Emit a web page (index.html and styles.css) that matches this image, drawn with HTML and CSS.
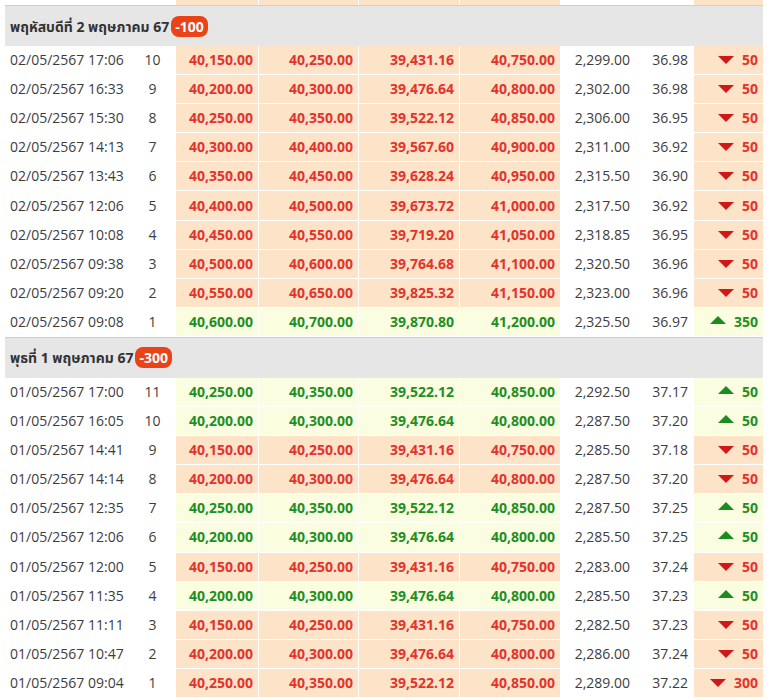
FILE: index.html
```html
<!DOCTYPE html>
<html lang="th">
<head>
<meta charset="utf-8">
<title>ราคาทองคำ</title>
<link rel="stylesheet" href="styles.css">
</head>
<body>
<table class="prices">
<colgroup>
<col class="w-date"><col class="w-n"><col class="w-a"><col class="w-b"><col class="w-b2"><col class="w-b3"><col class="w-c"><col class="w-d"><col class="w-e">
</colgroup>
<tbody>
<tr class="stub"><td></td><td></td><td class="dn"></td><td class="dn"></td><td class="dn"></td><td class="dn"></td><td></td><td></td><td class="dn"></td></tr>

<tr class="day"><td colspan="9">พฤหัสบดีที่ 2 พฤษภาคม 67<span class="badge">-100</span></td></tr>
<tr><td class="dt">02/05/2567 17:06</td><td class="n">10</td><td class="dn">40,150.00</td><td class="dn">40,250.00</td><td class="dn">39,431.16</td><td class="dn">40,750.00</td><td class="num">2,299.00</td><td class="num">36.98</td><td class="dn chg"><span class="tri down"></span>50</td></tr>
<tr><td class="dt">02/05/2567 16:33</td><td class="n">9</td><td class="dn">40,200.00</td><td class="dn">40,300.00</td><td class="dn">39,476.64</td><td class="dn">40,800.00</td><td class="num">2,302.00</td><td class="num">36.98</td><td class="dn chg"><span class="tri down"></span>50</td></tr>
<tr><td class="dt">02/05/2567 15:30</td><td class="n">8</td><td class="dn">40,250.00</td><td class="dn">40,350.00</td><td class="dn">39,522.12</td><td class="dn">40,850.00</td><td class="num">2,306.00</td><td class="num">36.95</td><td class="dn chg"><span class="tri down"></span>50</td></tr>
<tr><td class="dt">02/05/2567 14:13</td><td class="n">7</td><td class="dn">40,300.00</td><td class="dn">40,400.00</td><td class="dn">39,567.60</td><td class="dn">40,900.00</td><td class="num">2,311.00</td><td class="num">36.92</td><td class="dn chg"><span class="tri down"></span>50</td></tr>
<tr><td class="dt">02/05/2567 13:43</td><td class="n">6</td><td class="dn">40,350.00</td><td class="dn">40,450.00</td><td class="dn">39,628.24</td><td class="dn">40,950.00</td><td class="num">2,315.50</td><td class="num">36.90</td><td class="dn chg"><span class="tri down"></span>50</td></tr>
<tr><td class="dt">02/05/2567 12:06</td><td class="n">5</td><td class="dn">40,400.00</td><td class="dn">40,500.00</td><td class="dn">39,673.72</td><td class="dn">41,000.00</td><td class="num">2,317.50</td><td class="num">36.92</td><td class="dn chg"><span class="tri down"></span>50</td></tr>
<tr><td class="dt">02/05/2567 10:08</td><td class="n">4</td><td class="dn">40,450.00</td><td class="dn">40,550.00</td><td class="dn">39,719.20</td><td class="dn">41,050.00</td><td class="num">2,318.85</td><td class="num">36.95</td><td class="dn chg"><span class="tri down"></span>50</td></tr>
<tr><td class="dt">02/05/2567 09:38</td><td class="n">3</td><td class="dn">40,500.00</td><td class="dn">40,600.00</td><td class="dn">39,764.68</td><td class="dn">41,100.00</td><td class="num">2,320.50</td><td class="num">36.96</td><td class="dn chg"><span class="tri down"></span>50</td></tr>
<tr><td class="dt">02/05/2567 09:20</td><td class="n">2</td><td class="dn">40,550.00</td><td class="dn">40,650.00</td><td class="dn">39,825.32</td><td class="dn">41,150.00</td><td class="num">2,323.00</td><td class="num">36.96</td><td class="dn chg"><span class="tri down"></span>50</td></tr>
<tr><td class="dt">02/05/2567 09:08</td><td class="n">1</td><td class="up">40,600.00</td><td class="up">40,700.00</td><td class="up">39,870.80</td><td class="up">41,200.00</td><td class="num">2,325.50</td><td class="num">36.97</td><td class="up chg"><span class="tri rise"></span>350</td></tr>

<tr class="day"><td colspan="9">พุธที่ 1 พฤษภาคม 67<span class="badge">-300</span></td></tr>
<tr><td class="dt">01/05/2567 17:00</td><td class="n">11</td><td class="up">40,250.00</td><td class="up">40,350.00</td><td class="up">39,522.12</td><td class="up">40,850.00</td><td class="num">2,292.50</td><td class="num">37.17</td><td class="up chg"><span class="tri rise"></span>50</td></tr>
<tr><td class="dt">01/05/2567 16:05</td><td class="n">10</td><td class="up">40,200.00</td><td class="up">40,300.00</td><td class="up">39,476.64</td><td class="up">40,800.00</td><td class="num">2,287.50</td><td class="num">37.20</td><td class="up chg"><span class="tri rise"></span>50</td></tr>
<tr><td class="dt">01/05/2567 14:41</td><td class="n">9</td><td class="dn">40,150.00</td><td class="dn">40,250.00</td><td class="dn">39,431.16</td><td class="dn">40,750.00</td><td class="num">2,285.50</td><td class="num">37.18</td><td class="dn chg"><span class="tri down"></span>50</td></tr>
<tr><td class="dt">01/05/2567 14:14</td><td class="n">8</td><td class="dn">40,200.00</td><td class="dn">40,300.00</td><td class="dn">39,476.64</td><td class="dn">40,800.00</td><td class="num">2,287.50</td><td class="num">37.20</td><td class="dn chg"><span class="tri down"></span>50</td></tr>
<tr><td class="dt">01/05/2567 12:35</td><td class="n">7</td><td class="up">40,250.00</td><td class="up">40,350.00</td><td class="up">39,522.12</td><td class="up">40,850.00</td><td class="num">2,287.50</td><td class="num">37.25</td><td class="up chg"><span class="tri rise"></span>50</td></tr>
<tr><td class="dt">01/05/2567 12:06</td><td class="n">6</td><td class="up">40,200.00</td><td class="up">40,300.00</td><td class="up">39,476.64</td><td class="up">40,800.00</td><td class="num">2,285.50</td><td class="num">37.25</td><td class="up chg"><span class="tri rise"></span>50</td></tr>
<tr><td class="dt">01/05/2567 12:00</td><td class="n">5</td><td class="dn">40,150.00</td><td class="dn">40,250.00</td><td class="dn">39,431.16</td><td class="dn">40,750.00</td><td class="num">2,283.00</td><td class="num">37.24</td><td class="dn chg"><span class="tri down"></span>50</td></tr>
<tr><td class="dt">01/05/2567 11:35</td><td class="n">4</td><td class="up">40,200.00</td><td class="up">40,300.00</td><td class="up">39,476.64</td><td class="up">40,800.00</td><td class="num">2,285.50</td><td class="num">37.23</td><td class="up chg"><span class="tri rise"></span>50</td></tr>
<tr><td class="dt">01/05/2567 11:11</td><td class="n">3</td><td class="dn">40,150.00</td><td class="dn">40,250.00</td><td class="dn">39,431.16</td><td class="dn">40,750.00</td><td class="num">2,282.50</td><td class="num">37.23</td><td class="dn chg"><span class="tri down"></span>50</td></tr>
<tr><td class="dt">01/05/2567 10:47</td><td class="n">2</td><td class="dn">40,200.00</td><td class="dn">40,300.00</td><td class="dn">39,476.64</td><td class="dn">40,800.00</td><td class="num">2,286.00</td><td class="num">37.24</td><td class="dn chg"><span class="tri down"></span>50</td></tr>
<tr><td class="dt">01/05/2567 09:04</td><td class="n">1</td><td class="dn">40,250.00</td><td class="dn">40,350.00</td><td class="dn">39,522.12</td><td class="dn">40,850.00</td><td class="num">2,289.00</td><td class="num">37.22</td><td class="dn chg"><span class="tri down"></span>300</td></tr>
</tbody>
</table>
</body>
</html>
```
FILE: styles.css
```css
html, body {
  margin: 0;
  padding: 0;
  background: #ffffff;
}
body {
  font-family: "Open Sans", "Noto Sans", "Noto Sans Thai", sans-serif;
  font-size: 14px;
  color: #3d3d3d;
}
.prices {
  margin-left: 5px;
  width: 758px;
  table-layout: fixed;
  border-collapse: separate;
  border-spacing: 0;
}
.w-date { width: 125px; }
.w-n { width: 45px; }
.w-a { width: 83px; }
.w-b { width: 100px; }
.w-b2 { width: 101px; }
.w-b3 { width: 101px; }
.w-c { width: 75px; }
.w-d { width: 58px; }
.w-e { width: 70px; }

.prices td {
  box-sizing: border-box;
  height: 29.1px;
  padding: 0 5px;
  line-height: 20px;
  border-bottom: 1px solid #ffffff;
  white-space: nowrap;
  vertical-align: middle;
}
.prices tr.stub td {
  height: 5px;
  padding: 0;
  line-height: 0;
  border-bottom: 0;
}
.prices .dt { text-align: left; }
.prices .n { text-align: center; }
.prices .num { text-align: right; }
.prices .dn,
.prices .up {
  text-align: right;
  font-weight: 700;
  border-left: 1px solid #ffffff;
}
.prices .dn {
  background: #fde3c8;
  color: #e2332d;
}
.prices .up {
  background: #fbfde0;
  color: #1f8f25;
}
.prices tr.day td {
  height: 41px;
  background: #e6e6e6;
  border-top: 1px solid #cfcfcf;
  border-bottom: 0;
  font-weight: 700;
  color: #333333;
  padding: 0 5px;
}
.badge {
  display: inline-block;
  margin-left: 2px;
  padding: 0 4px;
  height: 21px;
  line-height: 21px;
  border-radius: 8px;
  background: #ea4318;
  color: #ffffff;
  font-weight: 700;
  vertical-align: 0;
}
.tri {
  display: inline-block;
  width: 0;
  height: 0;
  border-left: 8px solid transparent;
  border-right: 8px solid transparent;
  margin-right: 8px;
  vertical-align: 1px;
}
.tri.down {
  border-top: 8px solid #d01818;
}
.tri.rise {
  border-bottom: 8px solid #1a8c20;
  vertical-align: 3px;
}
```
